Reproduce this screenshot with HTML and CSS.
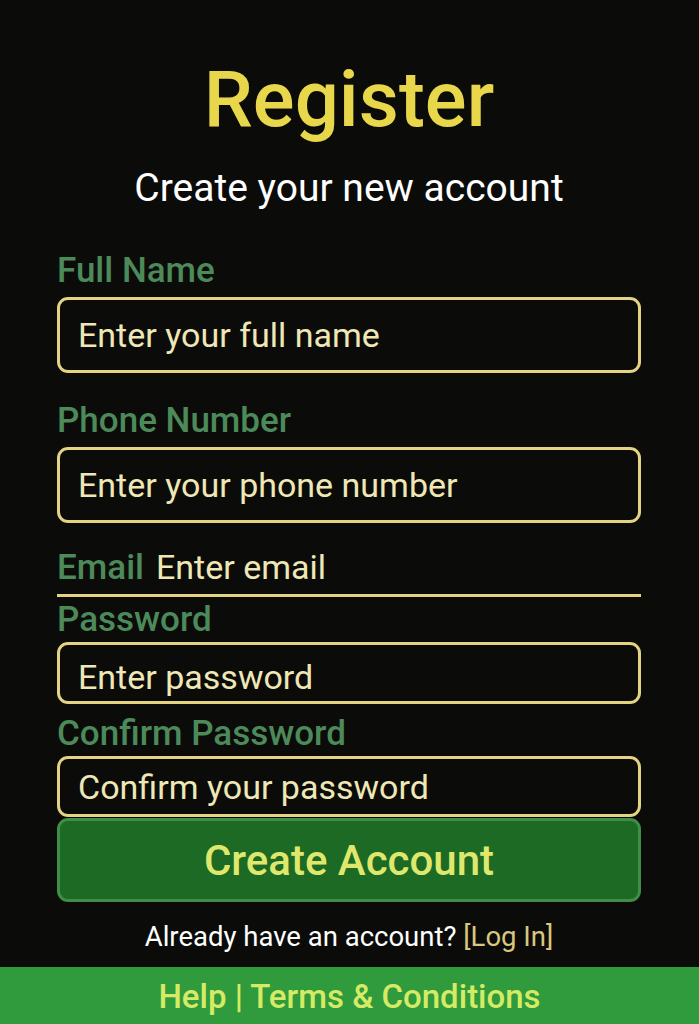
FILE: index.html
```html
<!DOCTYPE html>
<html lang="en">
<head>
  <meta charset="UTF-8" />
  <meta name="viewport" content="width=device-width, initial-scale=1.0"/>
  <title>Register</title>
  <link rel="stylesheet" href="styles.css">
</head>
<body>
  <main class="page">
    <h1 class="title">Register</h1>
    <p class="subtitle">Create your new account</p>

    <form class="register-form" action="#" method="POST">
      <div class="field field-name">
        <label for="fullName">Full Name</label>
        <input type="text" id="fullName" name="name" placeholder="Enter your full name" />
      </div>

      <div class="field field-phone">
        <label for="phone">Phone Number</label>
        <input type="tel" id="phone" name="phone" placeholder="Enter your phone number" />
      </div>

      <div class="email-row">
        <label for="email">Email</label>
        <input type="email" id="email" name="email" placeholder="Enter email" />
      </div>

      <div class="field field-pass">
        <label for="password">Password</label>
        <input type="password" id="password" name="password" placeholder="Enter password" />
      </div>

      <div class="field field-confirm">
        <label for="confirm">Confirm Password</label>
        <input type="password" id="confirm" name="confirm" placeholder="Confirm your password" />
      </div>

      <button type="submit" class="btn-create">Create Account</button>
    </form>

    <p class="login-note">Already have an account? <a href="#">[Log In]</a></p>
  </main>

  <footer class="footer">
    <a href="#">Help</a> | <a href="#">Terms &amp; Conditions</a>
  </footer>
</body>
</html>
```

FILE: styles.css
```css
body { margin: 0; background: #0b0c09; font-family: Roboto, "Liberation Sans", sans-serif; }
.page { padding: 55px 58px 14px 57px; }

.title { margin: 0; font-size: 78px; line-height: 90px; font-weight: 500; color: #e8d74a; text-align: center; }
.subtitle { margin: 21px 0 0; font-size: 39px; line-height: 44px; color: #fff; text-align: center; }

.register-form { display: flex; flex-direction: column; margin-top: 43px; }
.field { display: flex; flex-direction: column; }
.field label, .email-row label { font-size: 35px; line-height: 36px; font-weight: 500; color: #4d8a5a; }
.field input { box-sizing: border-box; width: 100%; height: 76px; margin-top: 8px; padding: 0 18px; background: #0b0c09; border: 3px solid #e3d383; border-radius: 11px; font-family: inherit; font-size: 34px; color: #efe7b6; outline: none; }
.field input::placeholder, .email-row input::placeholder { color: #efe7b6; opacity: 1; }

.field-phone { margin-top: 30px; }
.field-pass { margin-top: 5px; }
.field-pass input { height: 62px; margin-top: 4px; padding-top: 8px; }
.field-confirm { margin-top: 12px; }
.field-confirm input { height: 61px; margin-top: 4px; }

.email-row { display: flex; align-items: baseline; gap: 12px; margin-top: 26px; padding-bottom: 8px; border-bottom: 3px solid #e3d383; }
.email-row input { flex: 1; min-width: 0; padding: 0; background: transparent; border: none; font-family: inherit; font-size: 34px; line-height: 36px; color: #efe7b6; outline: none; }

.btn-create { height: 84px; margin-top: 1px; background: #1c6a24; border: 3px solid #3f8d47; border-radius: 11px; font-family: inherit; font-size: 42px; font-weight: 500; color: #dfe86c; cursor: pointer; }

.login-note { margin: 19px 0 0; font-size: 27.5px; line-height: 32px; color: #fff; text-align: center; }
.login-note a { color: #d9c77e; text-decoration: none; }

.footer { padding: 12px 0 20px; background: #2f9b3c; font-size: 33px; line-height: 36px; font-weight: 500; color: #d6ea66; text-align: center; }
.footer a { color: #d6ea66; text-decoration: none; }
```
